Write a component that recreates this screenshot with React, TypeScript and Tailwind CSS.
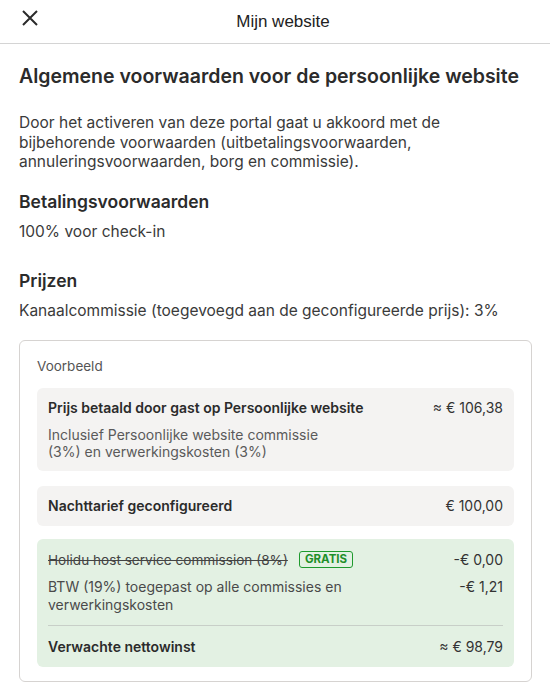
import React from "react";

export default function App() {
  return (
    <div className="min-h-screen bg-white text-[#2b2b2b]" style={{ fontFamily: "Inter, 'Noto Sans', sans-serif" }}>
      <header className="relative flex h-[44px] items-center justify-center border-b border-[#d4d4d4]">
        <button className="absolute left-[21px] top-[9px] text-[#2b2b2b]">
          <svg width="18" height="18" viewBox="0 0 18 18" fill="none" stroke="currentColor" strokeWidth="2">
            <path d="M2 2L16 16M16 2L2 16" />
          </svg>
        </button>
        <h1 className="ml-[16px] text-[17px] text-[#222]" style={{ fontFamily: "'Liberation Sans', Arial, sans-serif" }}>
          Mijn website
        </h1>
      </header>

      <main className="pl-[19px] pr-[18px] pt-[19px]">
        <h2 className="text-[19.5px] font-semibold leading-[26px] text-[#2b2b2b]">
          Algemene voorwaarden voor de persoonlijke website
        </h2>
        <p className="mt-[24px] pr-[20px] text-[15.5px] leading-[19.5px] text-[#3a3a3a]">
          Door het activeren van deze portal gaat u akkoord met de bijbehorende voorwaarden
          (uitbetalingsvoorwaarden, annuleringsvoorwaarden, borg en commissie).
        </p>

        <h3 className="mt-[18px] text-[17.5px] font-semibold leading-[24px]">Betalingsvoorwaarden</h3>
        <p className="mt-[8px] text-[15.5px] leading-[20px] text-[#3a3a3a]">100% voor check-in</p>

        <h3 className="mt-[27px] text-[17.5px] font-semibold leading-[24px]">Prijzen</h3>
        <p className="mt-[8px] text-[15.5px] leading-[20px] text-[#3a3a3a]">
          Kanaalcommissie (toegevoegd aan de geconfigureerde prijs): 3%
        </p>

        <section className="mt-[19px] rounded-[6px] border border-[#d6d3d1] px-[17px] pt-[16px] pb-[14px]">
          <div className="text-[13.5px] leading-[18px] text-[#555]">Voorbeeld</div>

          <div className="mt-[13px] rounded-[6px] bg-[#f4f3f2] px-[11px] pt-[10px] pb-[11px] text-[14px]">
            <div className="flex justify-between leading-[20px]">
              <span className="font-semibold">Prijs betaald door gast op Persoonlijke website</span>
              <span className="text-[#333]">≈ € 106,38</span>
            </div>
            <p className="mt-[8px] w-[280px] leading-[17px] text-[#5a5a5a]">
              Inclusief Persoonlijke website commissie (3%) en verwerkingskosten (3%)
            </p>
          </div>

          <div className="mt-[15px] flex h-[40px] items-center justify-between rounded-[6px] bg-[#f4f3f2] px-[11px] text-[14px]">
            <span className="font-semibold">Nachttarief geconfigureerd</span>
            <span className="text-[#333]">€ 100,00</span>
          </div>

          <div className="mt-[13px] rounded-[6px] bg-[#e3f1e3] px-[11px] pt-[11px] pb-[10px] text-[14px]">
            <div className="flex items-center justify-between leading-[20px]">
              <div className="flex items-center gap-[11px]">
                <span className="text-[13.6px] text-[#444] line-through">Holidu host service commission (8%)</span>
                <span className="rounded-[3px] border border-[#1f9a2e] px-[5px] text-[11.5px] font-bold leading-[15px] text-[#1f8f2a]">
                  GRATIS
                </span>
              </div>
              <span className="text-[#333]">-€ 0,00</span>
            </div>
            <div className="mt-[8px] flex justify-between leading-[18px]">
              <span className="w-[300px] text-[#4a4a4a]">
                BTW (19%) toegepast op alle commissies en verwerkingskosten
              </span>
              <span className="text-[#333]">-€ 1,21</span>
            </div>
            <div className="mt-[11px] border-t border-[#c8cfc8]" />
            <div className="mt-[11px] flex justify-between leading-[20px]">
              <span className="font-semibold">Verwachte nettowinst</span>
              <span className="text-[#333]">≈ € 98,79</span>
            </div>
          </div>
        </section>
      </main>
    </div>
  );
}
